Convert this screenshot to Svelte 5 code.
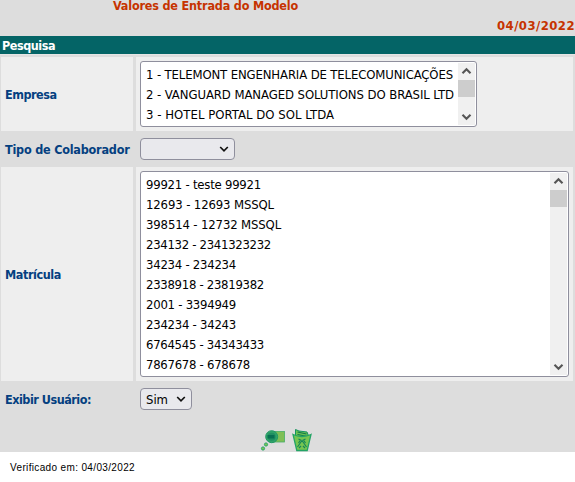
<script>
  const companies = [
    ['1 - TELEMONT ENGENHARIA DE TELECOMUNICAÇÕES', 307],
    ['2 - VANGUARD MANAGED SOLUTIONS DO BRASIL LTD', 308],
    ['3 - HOTEL PORTAL DO SOL LTDA', 188]
  ];
  const people = [
    ['99921 - teste 99921', 115], ['12693 - 12693 MSSQL', 128], ['398514 - 12732 MSSQL', 135],
    ['234132 - 2341323232', 125], ['34234 - 234234', 90], ['2338918 - 23819382', 118],
    ['2001 - 3394949', 90], ['234234 - 34243', 90], ['6764545 - 34343433', 118], ['7867678 - 678678', 104]
  ];
  // Spreads the letters of a label evenly over the given width.
  function fit(node, width) {
    const natural = node.getBoundingClientRect().width;
    node.style.letterSpacing = `${(width - natural) / node.textContent.length}px`;
  }
</script>

{#snippet chevron(up)}
  <svg class="arrow" width="17" height="17" viewBox="0 0 17 17">
    <path d={up ? 'M4.5 10.3 8.5 6.3l4 4' : 'M4.5 6.7l4 4 4-4'} fill="none" stroke="#555" stroke-width="2.1" />
  </svg>
{/snippet}

{#snippet listbox(items)}
  <ul>
    {#each items as [label, width]}
      <li><span use:fit={width}>{label}</span></li>
    {/each}
  </ul>
  <div class="scroll">
    {@render chevron(true)}
    <div class="thumb"></div>
    {@render chevron(false)}
  </div>
{/snippet}

{#snippet caret()}
  <svg width="10" height="8" viewBox="0 0 10 8"><path d="M1.2 2 5 5.8 8.8 2" fill="none" stroke="#111" stroke-width="1.7" /></svg>
{/snippet}

<main>
  <h1><span use:fit={185}>Valores de Entrada do Modelo</span></h1>
  <div class="date"><span use:fit={78}>04/03/2022</span></div>
  <h2><span use:fit={53}>Pesquisa</span></h2>
  <div class="grid">
    <div class="label cell"><span use:fit={51.5}>Empresa</span></div>
    <div class="field cell"><div class="list small">{@render listbox(companies)}</div></div>
    <div class="label"><span use:fit={124.5}>Tipo de Colaborador</span></div>
    <div class="field"><div class="select wide">{@render caret()}</div></div>
    <div class="label cell"><span use:fit={56}>Matrícula</span></div>
    <div class="field cell"><div class="list large">{@render listbox(people)}</div></div>
    <div class="label"><span use:fit={86}>Exibir Usuário:</span></div>
    <div class="field"><div class="select"><span use:fit={22}>Sim</span>{@render caret()}</div></div>
  </div>
  <div class="actions">
    <svg width="27" height="24" viewBox="0 0 27 24">
      <rect x="11" y="3.5" width="13.5" height="10.5" fill="#7fbf55" stroke="#48ad67" stroke-width=".8" />
      <circle cx="11.7" cy="8.7" r="6" fill="#2fa368" stroke="#239866" />
      <circle cx="11.7" cy="8.7" r="4" fill="#218f62" />
      <path d="M7.5 7h7v3.5h-7z" fill="#087052" />
      <circle cx="6" cy="16.5" r="1.6" fill="#78c652" stroke="#2ca56a" />
      <circle cx="3" cy="20.5" r="1.6" fill="#78c652" stroke="#2ca56a" />
    </svg>
    <svg width="20" height="24" viewBox="0 0 20 24">
      <path d="M3.5 8V1.5L7 3l8 1 2 5-12 2z" fill="#6bc451" stroke="#169360" />
      <path d="m5.5 4 9 2M5.5 6.5l10 2" stroke="#13764e" stroke-width="1.2" />
      <path d="M1 6.5q9 4 18 0L15.2 22.5H4.8z" fill="#76c551" stroke="#23a466" stroke-width="1.3" />
      <path d="m5.5 19 4.5-6.5 4.5 6.5M6.5 11l2 1-2 3M13.5 11l-2 1 2 3M7 20l2-2M13 20l-2-2" fill="none" stroke="#15865a" stroke-width="1.1" />
    </svg>
  </div>
</main>
<footer><span use:fit={125}>Verificado em: 04/03/2022</span></footer>

<style>
  :global(body) { margin: 0; background: #fff; }
  main { height: 452px; overflow: hidden; background: #ddd; font: 13px/20px "DejaVu Sans Condensed", "DejaVu Sans", sans-serif; font-stretch: condensed; color: #000; }
  span { display: inline-block; white-space: nowrap; }
  h1, h2 { margin: 0; font-size: 12.5px; font-weight: bold; }
  h1 { height: 16px; padding-left: 113px; line-height: 12px; color: #c63300; }
  .date { height: 20px; text-align: right; font-weight: bold; color: #c63300; }
  h2 { box-sizing: border-box; height: 19px; line-height: 19px; padding-left: 2px; background: #046466; color: #fff; border-bottom: 1px solid #e5e5e5; }
  .grid { display: grid; grid-template-columns: 132px 437px; grid-template-rows: 74px 36px 214px 36px; column-gap: 3px; padding: 2px 0 0 1px; }
  .label { display: flex; align-items: center; padding: 1px 0 0 4px; font-size: 12.5px; font-weight: bold; color: #044080; }
  .field { display: flex; align-items: center; padding-left: 4px; }
  .cell { background: #eee; }
  .list, .select { box-sizing: border-box; display: flex; border: 1px solid #8f8f9d; border-radius: 3px; background: #fff; }
  .list { padding: 1px; }
  .small { width: 337px; height: 66px; }
  .large { width: 429px; height: 206px; }
  ul { flex: 1; min-width: 0; margin: 0; padding: 2px 0 0 4px; list-style: none; overflow: hidden; }
  li { height: 20px; }
  .scroll { width: 17px; display: flex; flex-direction: column; background: #f0f0f0; }
  .arrow { display: block; flex: none; }
  .arrow:last-child { margin-top: auto; }
  .thumb { height: 17px; background: #cdcdcd; }
  .select { width: 52px; height: 22px; padding: 0 5px; align-items: center; justify-content: space-between; border-radius: 4px; background: #e9e9ed; }
  .select span { padding-top: 1px; }
  .wide { width: 95px; justify-content: flex-end; }
  .actions { display: flex; gap: 5px; padding: 11px 0 0 260px; }
  footer { padding: 9px 0 0 10px; font: 10px/14px "Liberation Sans", sans-serif; color: #000; }
</style>
